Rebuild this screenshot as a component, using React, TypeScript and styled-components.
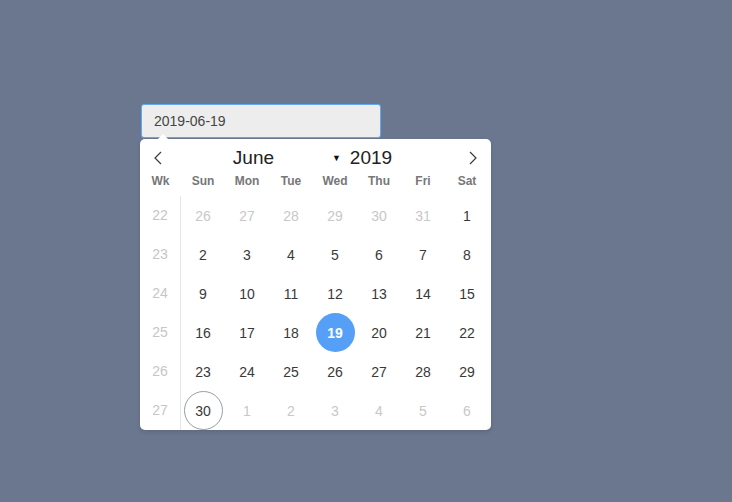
import React from 'react';
import styled, { createGlobalStyle } from 'styled-components';

const GlobalStyle = createGlobalStyle`
  html, body {
    margin: 0;
    padding: 0;
    background: #6b778e;
    font-family: "Liberation Sans", Arial, sans-serif;
  }
`;

const Page = styled.div`
  width: 732px;
  height: 502px;
  padding: 104px 0 0 140px;
  box-sizing: border-box;
`;

const DateInput = styled.div`
  width: 240px;
  height: 34px;
  margin-left: 1px;
  box-sizing: border-box;
  border: 1px solid #62a8ec;
  border-radius: 3px;
  background: #ededed;
  color: #454545;
  font-size: 14px;
  line-height: 33px;
  padding-left: 12px;
`;

const Calendar = styled.div`
  position: relative;
  width: 351px;
  margin-top: 1px;
  background: #fff;
  border-radius: 5px;
  box-shadow: 0 2px 4px rgba(0, 0, 0, 0.12);
  box-sizing: border-box;

  &::before {
    content: '';
    position: absolute;
    top: -5px;
    left: 18px;
    border: 5px solid transparent;
    border-top: 0;
    border-bottom-color: #fff;
  }
`;

const Nav = styled.div`
  display: flex;
  align-items: center;
  height: 34px;
  box-sizing: border-box;
  padding: 3px 1px 0;
`;

const NavButton = styled.div`
  width: 34px;
  height: 31px;
  display: flex;
  align-items: center;
  justify-content: center;
  color: #3a3a3a;
`;

const NavCenter = styled.div`
  flex: 1;
  display: flex;
  align-items: center;
  justify-content: center;
  padding-right: 6px;
  color: #222;
  font-size: 19px;
`;

const MonthSelect = styled.div`
  width: 108px;
  display: flex;
  align-items: center;
  justify-content: space-between;
  margin-right: 9px;
`;

const Caret = styled.span`
  font-size: 9px;
  color: #111;
`;

const Grid = styled.div`
  display: flex;
`;

const WeekColumn = styled.div`
  width: 40px;
  border-right: 1px solid #e6e6e6;
`;

const DaysColumn = styled.div`
  width: 308px;
`;

const WeekdayRow = styled.div`
  display: grid;
  grid-template-columns: repeat(7, 44px);
  height: 23px;
  line-height: 16px;
`;

const WeekHeader = styled.div`
  height: 23px;
  line-height: 16px;
  text-align: center;
  font-size: 12px;
  font-weight: bold;
  color: #777;
`;

const Weekday = styled.span`
  text-align: center;
  font-size: 12px;
  font-weight: bold;
  color: #777;
`;

const WeekNum = styled.div`
  height: 39px;
  line-height: 39px;
  text-align: center;
  font-size: 14px;
  color: #c6c6c6;
`;

const DayGrid = styled.div`
  display: grid;
  grid-template-columns: repeat(7, 44px);
  grid-auto-rows: 39px;
`;

const Day = styled.span<{ $muted?: boolean; $selected?: boolean; $today?: boolean }>`
  justify-self: center;
  width: 39px;
  height: 39px;
  box-sizing: border-box;
  border-radius: 50%;
  display: flex;
  align-items: center;
  justify-content: center;
  font-size: 14px;
  color: ${p => (p.$selected ? '#fff' : p.$muted ? '#c8c8c8' : '#393939')};
  background: ${p => (p.$selected ? '#569ff7' : 'transparent')};
  font-weight: ${p => (p.$selected ? 'bold' : 'normal')};
  border: 1px solid ${p => (p.$today ? '#959ea9' : 'transparent')};
`;

const Chevron = ({ dir }: { dir: 'left' | 'right' }) => (
  <svg width="8" height="14" viewBox="0 0 8 14">
    <path
      d={dir === 'left' ? 'M7 1 L1 7 L7 13' : 'M1 1 L7 7 L1 13'}
      fill="none"
      stroke="currentColor"
      strokeWidth="1.2"
    />
  </svg>
);

const weekdays = ['Sun', 'Mon', 'Tue', 'Wed', 'Thu', 'Fri', 'Sat'];
const weeks = [22, 23, 24, 25, 26, 27];

type Cell = { n: number; muted?: boolean };

const cells: Cell[] = [
  ...[26, 27, 28, 29, 30, 31].map(n => ({ n, muted: true })),
  ...Array.from({ length: 30 }, (_, i) => ({ n: i + 1 })),
  ...[1, 2, 3, 4, 5, 6].map(n => ({ n, muted: true })),
];

const App: React.FC = () => {
  return (
    <Page>
      <GlobalStyle />
      <DateInput>2019-06-19</DateInput>
      <Calendar>
        <Nav>
          <NavButton>
            <Chevron dir="left" />
          </NavButton>
          <NavCenter>
            <MonthSelect>
              <span>June</span>
              <Caret>▼</Caret>
            </MonthSelect>
            <span>2019</span>
          </NavCenter>
          <NavButton>
            <Chevron dir="right" />
          </NavButton>
        </Nav>
        <Grid>
          <div>
            <WeekHeader>Wk</WeekHeader>
            <WeekColumn>
              {weeks.map(w => (
                <WeekNum key={w}>{w}</WeekNum>
              ))}
            </WeekColumn>
          </div>
          <DaysColumn>
            <WeekdayRow>
              {weekdays.map(d => (
                <Weekday key={d}>{d}</Weekday>
              ))}
            </WeekdayRow>
            <DayGrid>
              {cells.map((c, i) => (
                <Day
                  key={i}
                  $muted={c.muted}
                  $selected={!c.muted && c.n === 19}
                  $today={!c.muted && c.n === 30}
                >
                  {c.n}
                </Day>
              ))}
            </DayGrid>
          </DaysColumn>
        </Grid>
      </Calendar>
    </Page>
  );
};

export default App;
